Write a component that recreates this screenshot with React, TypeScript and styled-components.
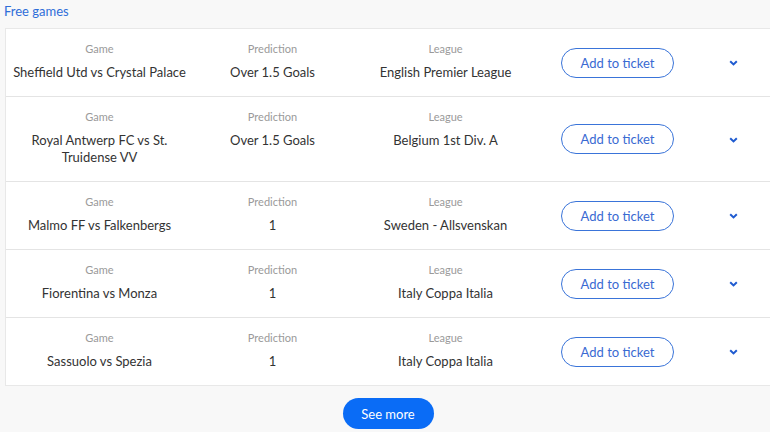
import React from "react";
import styled, { createGlobalStyle } from "styled-components";

type Game = {
  game: string;
  prediction: string;
  league: string;
};

const games: Game[] = [
  { game: "Sheffield Utd vs Crystal Palace", prediction: "Over 1.5 Goals", league: "English Premier League" },
  { game: "Royal Antwerp FC vs St. Truidense VV", prediction: "Over 1.5 Goals", league: "Belgium 1st Div. A" },
  { game: "Malmo FF vs Falkenbergs", prediction: "1", league: "Sweden - Allsvenskan" },
  { game: "Fiorentina vs Monza", prediction: "1", league: "Italy Coppa Italia" },
  { game: "Sassuolo vs Spezia", prediction: "1", league: "Italy Coppa Italia" },
];

const GlobalStyle = createGlobalStyle`
  body {
    margin: 0;
    background: #f8f8f8;
    font-family: Lato, "Liberation Sans", sans-serif;
    overflow: hidden;
  }
`;

const Page = styled.div`
  width: 770px;
  height: 432px;
  overflow: hidden;
`;

const Heading = styled.div`
  padding: 3px 0 0 4px;
  height: 25px;
  font-size: 13px;
  color: #2f6ed8;
`;

const Card = styled.div`
  margin-left: 5px;
  width: 800px;
  background: #fff;
  border: 1px solid #e8e8e8;
  border-right: none;
`;

const Row = styled.div`
  display: grid;
  grid-template-columns: 173px 173px 173px 141px 122px;
  align-items: start;
  padding: 0 0 0 7px;
  border-bottom: 1px solid #e4e4e4;
  &:last-child {
    border-bottom: none;
  }
`;

const Cell = styled.div`
  display: flex;
  flex-direction: column;
  align-items: center;
  text-align: center;
  padding: 12px 0 15px;
`;

const Label = styled.div`
  font-size: 11px;
  line-height: 16px;
  color: #9a9a9a;
`;

const Value = styled.div<{ $narrow?: boolean }>`
  margin-top: 7px;
  font-size: 13px;
  line-height: 17px;
  color: #333;
  max-width: ${(p) => (p.$narrow ? "150px" : "180px")};
`;

const TicketCell = styled.div`
  align-self: center;
  padding-left: 29px;
`;

const ToggleCell = styled.div`
  align-self: center;
  display: flex;
  justify-content: center;
  padding: 1px 2px 0 0;
`;

const TicketButton = styled.button`
  display: block;
  width: 113px;
  height: 30px;
  border: 1px solid #3a74d9;
  border-radius: 15px;
  background: #fff;
  color: #3a6ad2;
  font-family: inherit;
  font-size: 13px;
  padding: 0;
`;

const Footer = styled.div`
  display: flex;
  justify-content: center;
  padding-top: 12px;
  padding-left: 6px;
`;

const MoreButton = styled.button`
  width: 91px;
  height: 31px;
  border: none;
  border-radius: 16px;
  background: #0a6cf6;
  color: #fff;
  font-family: inherit;
  font-size: 13px;
  padding: 0;
`;

const ChevronIcon = () => (
  <svg width="9" height="6" viewBox="0 0 9 6">
    <polyline points="1.2,1.2 4.5,4.4 7.8,1.2" fill="none" stroke="#1f5bd0" strokeWidth="2" />
  </svg>
);

export default function App() {
  return (
    <Page>
      <GlobalStyle />
      <Heading>Free games</Heading>
      <Card>
        {games.map((g) => (
          <Row key={g.game}>
            <Cell>
              <Label>Game</Label>
              <Value $narrow={g.game.length > 32}>{g.game}</Value>
            </Cell>
            <Cell>
              <Label>Prediction</Label>
              <Value>{g.prediction}</Value>
            </Cell>
            <Cell>
              <Label>League</Label>
              <Value>{g.league}</Value>
            </Cell>
            <TicketCell>
              <TicketButton>Add to ticket</TicketButton>
            </TicketCell>
            <ToggleCell>
              <ChevronIcon />
            </ToggleCell>
          </Row>
        ))}
      </Card>
      <Footer>
        <MoreButton>See more</MoreButton>
      </Footer>
    </Page>
  );
}
